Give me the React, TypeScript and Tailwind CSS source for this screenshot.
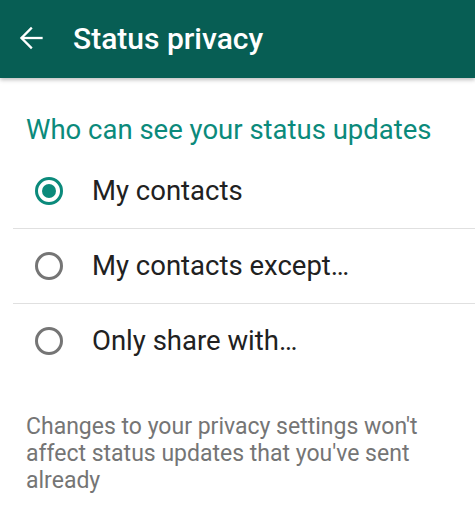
const options = [
  { label: "My contacts", selected: true },
  { label: "My contacts except…", selected: false },
  { label: "Only share with…", selected: false },
];

function BackArrow() {
  return (
    <svg width="24" height="24" viewBox="0 0 24 24" fill="none" stroke="white" strokeWidth="2.3" strokeLinecap="square" className="shrink-0">
      <path d="M22.5 12H3" />
      <path d="M12 2.5 2.5 12 12 21.5" />
    </svg>
  );
}

function Radio({ checked }: { checked: boolean }) {
  return (
    <div
      className={`w-[28px] h-[28px] rounded-full border-[3px] flex items-center justify-center shrink-0 ${
        checked ? "border-[#0b8a7b]" : "border-[#757575]"
      }`}
    >
      {checked && <div className="w-[14px] h-[14px] rounded-full bg-[#0b8a7b]" />}
    </div>
  );
}

export default function App() {
  return (
    <div className="w-[475px] h-[519px] bg-white overflow-hidden" style={{ fontFamily: "Roboto, 'Liberation Sans', sans-serif" }}>
      {/* Toolbar */}
      <header className="h-[78px] bg-[#075e54] flex items-center shadow-[0_2px_4px_rgba(0,0,0,0.25)] relative">
        <div className="ml-[19px] -mt-[2px]">
          <BackArrow />
        </div>
        <h1 className="ml-[30px] text-white text-[30px] font-medium -mt-[2px]">Status privacy</h1>
      </header>

      {/* Options */}
      <div className="pt-[32px]">
        <div className="px-[26px] text-[27.5px] text-[#0b8a7b] leading-[40px]">Who can see your status updates</div>
        <div className="mt-[4px]">
          {options.map((opt, i) => (
            <div key={opt.label} className={i > 0 ? "ml-[13px] border-t border-[#e0e0e0]" : "ml-[13px]"}>
              <div className="h-[74px] flex items-center -ml-[13px] pl-[35px]">
                <Radio checked={opt.selected} />
                <span className="ml-[29px] text-[27.5px] text-[#212121]">{opt.label}</span>
              </div>
            </div>
          ))}
        </div>
        <p className="px-[26px] mt-[35px] text-[23px] leading-[27px] text-[#757575]">
          Changes to your privacy settings won't affect status updates that you've sent already
        </p>
      </div>
    </div>
  );
}
